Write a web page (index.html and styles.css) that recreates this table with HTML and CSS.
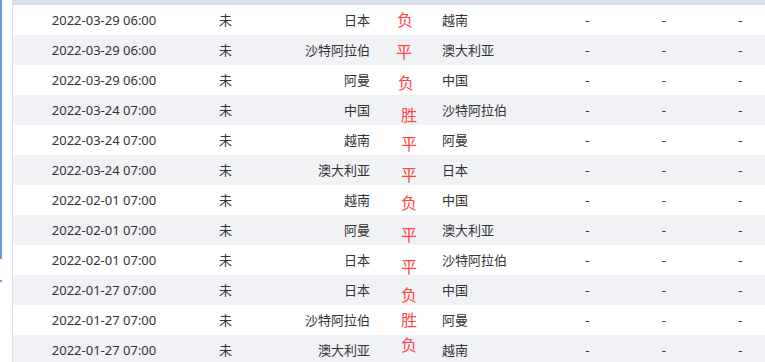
FILE: index.html
```html
<!DOCTYPE html>
<html lang="zh-CN">
<head>
<meta charset="utf-8">
<title>赛程</title>
<link rel="stylesheet" href="styles.css">
</head>
<body>
<div class="page">
  <div class="rail">
    <div class="rail-line"></div>
    <div class="rail-mark"></div>
  </div>
  <div class="table">
    <div class="thead"></div>
    <div class="row"><div class="c date">2022-03-29 06:00</div><div class="c st">未</div><div class="c home">日本</div><div class="c res"><span class="r j1">负</span></div><div class="c away">越南</div><div class="c d">-</div><div class="c d">-</div><div class="c d">-</div></div>
    <div class="row alt"><div class="c date">2022-03-29 06:00</div><div class="c st">未</div><div class="c home">沙特阿拉伯</div><div class="c res"><span class="r j2">平</span></div><div class="c away">澳大利亚</div><div class="c d">-</div><div class="c d">-</div><div class="c d">-</div></div>
    <div class="row"><div class="c date">2022-03-29 06:00</div><div class="c st">未</div><div class="c home">阿曼</div><div class="c res"><span class="r j3">负</span></div><div class="c away">中国</div><div class="c d">-</div><div class="c d">-</div><div class="c d">-</div></div>
    <div class="row alt"><div class="c date">2022-03-24 07:00</div><div class="c st">未</div><div class="c home">中国</div><div class="c res"><span class="r j5">胜</span></div><div class="c away">沙特阿拉伯</div><div class="c d">-</div><div class="c d">-</div><div class="c d">-</div></div>
    <div class="row"><div class="c date">2022-03-24 07:00</div><div class="c st">未</div><div class="c home">越南</div><div class="c res"><span class="r j4">平</span></div><div class="c away">阿曼</div><div class="c d">-</div><div class="c d">-</div><div class="c d">-</div></div>
    <div class="row alt"><div class="c date">2022-03-24 07:00</div><div class="c st">未</div><div class="c home">澳大利亚</div><div class="c res"><span class="r j5">平</span></div><div class="c away">日本</div><div class="c d">-</div><div class="c d">-</div><div class="c d">-</div></div>
    <div class="row"><div class="c date">2022-02-01 07:00</div><div class="c st">未</div><div class="c home">越南</div><div class="c res"><span class="r j3b">负</span></div><div class="c away">中国</div><div class="c d">-</div><div class="c d">-</div><div class="c d">-</div></div>
    <div class="row alt"><div class="c date">2022-02-01 07:00</div><div class="c st">未</div><div class="c home">阿曼</div><div class="c res"><span class="r j6">平</span></div><div class="c away">澳大利亚</div><div class="c d">-</div><div class="c d">-</div><div class="c d">-</div></div>
    <div class="row"><div class="c date">2022-02-01 07:00</div><div class="c st">未</div><div class="c home">日本</div><div class="c res"><span class="r j7">平</span></div><div class="c away">沙特阿拉伯</div><div class="c d">-</div><div class="c d">-</div><div class="c d">-</div></div>
    <div class="row alt"><div class="c date">2022-01-27 07:00</div><div class="c st">未</div><div class="c home">日本</div><div class="c res"><span class="r j5">负</span></div><div class="c away">中国</div><div class="c d">-</div><div class="c d">-</div><div class="c d">-</div></div>
    <div class="row"><div class="c date">2022-01-27 07:00</div><div class="c st">未</div><div class="c home">沙特阿拉伯</div><div class="c res"><span class="r j0">胜</span></div><div class="c away">阿曼</div><div class="c d">-</div><div class="c d">-</div><div class="c d">-</div></div>
    <div class="row alt"><div class="c date">2022-01-27 07:00</div><div class="c st">未</div><div class="c home">澳大利亚</div><div class="c res"><span class="r jm">负</span></div><div class="c away">越南</div><div class="c d">-</div><div class="c d">-</div><div class="c d">-</div></div>
  </div>
</div>
</body>
</html>
```
FILE: styles.css
```css
html, body {
  margin: 0;
  padding: 0;
  background: #fff;
  overflow: hidden;
}
body {
  font-family: "Noto Sans", "Noto Sans CJK SC", sans-serif;
  font-size: 13px;
  color: #333;
}
.page {
  display: flex;
  width: 800px;
  height: 362px;
}
.rail {
  width: 12px;
  flex: none;
  display: flex;
  flex-direction: column;
}
.rail-line {
  width: 2px;
  height: 259px;
  background: #6b9fd3;
}
.rail-mark {
  width: 2px;
  height: 2px;
  margin-top: 21px;
  background: #6b9fd3;
}
.table {
  flex: none;
  border-left: 1px solid #dcdfee;
  width: 767px;
}
.thead {
  height: 5px;
  background: #d9dfea;
  margin-left: -1px;
}
.row {
  display: grid;
  grid-template-columns: 182px 61px 119px 60px 114px 76.5px 76.5px 76.5px;
  height: 30px;
  line-height: 30px;
  background: #fff;
}
.row.alt {
  background: #f1f2f6;
}
.c {
  white-space: nowrap;
  overflow: visible;
}
.date, .st, .d {
  text-align: center;
}
.home {
  text-align: right;
  padding-right: 5px;
}
.res {
  text-align: center;
  padding-left: 8px;
}
.away {
  text-align: left;
  padding-left: 7px;
}
.r {
  display: inline-block;
  font-size: 16px;
  color: #ff4545;
}
.j0 { transform: translate(0, 0); }
.j1 { transform: translate(-4px, 0); }
.j2 { transform: translate(-5px, 2px); }
.j3 { transform: translate(-3px, 3px); }
.j3b { transform: translate(0, 3px); }
.j4 { transform: translate(0, 4px); }
.j5 { transform: translate(0, 5px); }
.j6 { transform: translate(0, 5px); }
.j7 { transform: translate(0, 7px); }
.jm { transform: translate(0, -5px); }
```
